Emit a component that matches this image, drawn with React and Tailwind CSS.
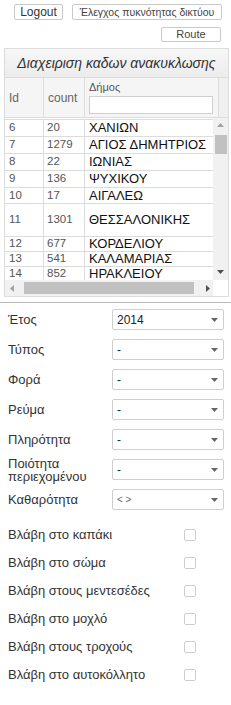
import React from 'react';

const rows = [
  { id: 6, count: 20, name: 'ΧΑΝΙΩΝ', h: 'h-[17px]' },
  { id: 7, count: 1279, name: 'ΑΓΙΟΣ ΔΗΜΗΤΡΙΟΣ', h: 'h-[17px]' },
  { id: 8, count: 22, name: 'ΙΩΝΙΑΣ', h: 'h-[17px]' },
  { id: 9, count: 136, name: 'ΨΥΧΙΚΟΥ', h: 'h-[17px]' },
  { id: 10, count: 17, name: 'ΑΙΓΑΛΕΩ', h: 'h-[16px]' },
  { id: 11, count: 1301, name: 'ΘΕΣΣΑΛΟΝΙΚΗΣ', h: 'h-[33px]' },
  { id: 12, count: 677, name: 'ΚΟΡΔΕΛΙΟΥ', h: 'h-[15px]' },
  { id: 13, count: 541, name: 'ΚΑΛΑΜΑΡΙΑΣ', h: 'h-[15px]' },
  { id: 14, count: 852, name: 'ΗΡΑΚΛΕΙΟΥ', h: 'h-[15px]' },
];

const selects = [
  { label: 'Έτος', value: '2014' },
  { label: 'Τύπος', value: '-' },
  { label: 'Φορά', value: '-' },
  { label: 'Ρεύμα', value: '-' },
  { label: 'Πληρότητα', value: '-' },
  { label: 'Ποιότητα περιεχομένου', value: '-', two: true },
  { label: 'Καθαρότητα', value: '< >', muted: true },
];

const checks = [
  'Βλάβη στο καπάκι',
  'Βλάβη στο σώμα',
  'Βλάβη στους μεντεσέδες',
  'Βλάβη στο μοχλό',
  'Βλάβη στους τροχούς',
  'Βλάβη στο αυτοκόλλητο',
];

const Tri = ({ dir = 'down', className = '' }) => {
  const pts = {
    down: '0,0 7,0 3.5,4',
    up: '0,4 7,4 3.5,0',
    left: '4,0 4,7 0,3.5',
    right: '0,0 0,7 4,3.5',
  }[dir];
  const vert = dir === 'down' || dir === 'up';
  return (
    <svg width={vert ? 7 : 4} height={vert ? 4 : 7} className={className}>
      <polygon points={pts} fill="currentColor" />
    </svg>
  );
};

const App = () => {
  return (
    <div className="w-[231px] h-[705px] bg-white overflow-hidden font-['Liberation_Sans',Arial,sans-serif] text-[#333]">
      {/* top buttons */}
      <div className="flex pt-[4px] pl-[14px] gap-[9px]">
        <button className="w-[49px] h-[16px] border border-[#c9c9c9] rounded-[2px] bg-white text-[12px] leading-[14px] text-[#333]">
          Logout
        </button>
        <button className="w-[150px] h-[16px] border border-[#c9c9c9] rounded-[2px] bg-white text-[10.5px] leading-[14px] text-[#444]">
          Έλεγχος πυκνότητας δικτύου
        </button>
      </div>
      <div className="flex justify-end pr-[10px] mt-[7px]">
        <button className="w-[60px] h-[15px] border border-[#c9c9c9] rounded-[2px] bg-white text-[11px] leading-[13px] text-[#444]">
          Route
        </button>
      </div>

      {/* table panel */}
      <div className="ml-[4px] mt-[6px] w-[225px] border border-[#dcdcdc] bg-[#f0f0f0]">
        <div className="h-[29px] flex items-center justify-center italic text-[14px] text-[#333] bg-gradient-to-b from-[#f7f7f7] to-[#ececec] border-b border-[#dcdcdc]">
          Διαχειριση καδων ανακυκλωσης
        </div>
        <div className="flex h-[40px] bg-[#f0f0f0] border-b border-[#dcdcdc]">
          <div className="w-[39px] border-r border-[#dcdcdc] bg-[#f5f5f5] flex items-center pl-[4px] text-[12px] text-[#666]">Id</div>
          <div className="w-[41px] border-r border-[#dcdcdc] bg-[#f5f5f5] flex items-center pl-[4px] text-[12px] text-[#666]">count</div>
          <div className="w-[134px] border-r border-[#dcdcdc] bg-[#f5f5f5] pl-[4px] pt-[3px]">
            <div className="text-[11px] leading-[13px] text-[#555]">Δήμος</div>
            <div className="mt-[2px] w-[124px] h-[18px] bg-white border border-[#cfcfcf]" />
          </div>
        </div>
        <div className="flex h-[162px]">
          <div className="w-[208px] bg-white overflow-hidden">
            <div className="h-[2px] border-b border-[#dcdcdc]" />
            {rows.map((r) => (
              <div key={r.id} className={`flex ${r.h} border-b border-[#dcdcdc]`}>
                <div className="w-[39px] shrink-0 border-r border-[#dcdcdc] flex items-center pl-[4px] text-[11.5px] text-[#555]">{r.id}</div>
                <div className="w-[41px] shrink-0 border-r border-[#dcdcdc] flex items-center pl-[3px] text-[11.5px] text-[#555]">{r.count}</div>
                <div className="flex-1 flex items-center pl-[4px] text-[13px] text-[#111] whitespace-nowrap">{r.name}</div>
              </div>
            ))}
          </div>
          <div className="w-[15px] bg-[#f1f1f1] flex flex-col items-center">
            <Tri dir="up" className="mt-[5px] text-[#a3a3a3]" />
            <div className="mt-[8px] w-[12px] h-[19px] bg-[#c1c1c1]" />
            <div className="flex-1" />
            <Tri dir="down" className="mb-[6px] text-[#505050]" />
          </div>
        </div>
        <div className="flex h-[16px]">
          <div className="w-[208px] bg-[#f1f1f1] flex items-center">
            <Tri dir="left" className="ml-[5px] text-[#a3a3a3]" />
            <div className="ml-[10px] w-[170px] h-[12px] bg-[#c1c1c1]" />
            <Tri dir="right" className="ml-[12px] text-[#505050]" />
          </div>
          <div className="flex-1 bg-white" />
        </div>
      </div>

      <div className="mt-[5px] border-t border-[#b9b9b9]" />

      {/* selects */}
      <div className="pt-[6px] flex flex-col gap-[9px]">
        {selects.map((s) => (
          <div key={s.label} className="flex items-center h-[21px]">
            <div className={`w-[112px] shrink-0 pl-[8px] text-[13px] text-[#333] ${s.two ? 'leading-[13px]' : ''}`}>
              {s.label}
            </div>
            <div className="w-[112px] shrink-0 h-[21px] border border-[#cfcfcf] rounded-[2px] bg-white flex items-center justify-between pl-[4px] pr-[5px]">
              <span className={s.muted ? 'text-[10px] text-[#666]' : 'text-[12px] text-[#222]'}>{s.value}</span>
              <Tri dir="down" className="text-[#666]" />
            </div>
          </div>
        ))}
      </div>

      {/* checkboxes */}
      <div className="mt-[11px] flex flex-col">
        {checks.map((c) => (
          <div key={c} className="flex items-center h-[28px] pl-[8px]">
            <div className="w-[176px] text-[13px] text-[#333]">{c}</div>
            <div className="w-[12px] h-[12px] border border-[#cdcdcd] rounded-[2px] bg-white" />
          </div>
        ))}
      </div>
    </div>
  );
};

export default App;
